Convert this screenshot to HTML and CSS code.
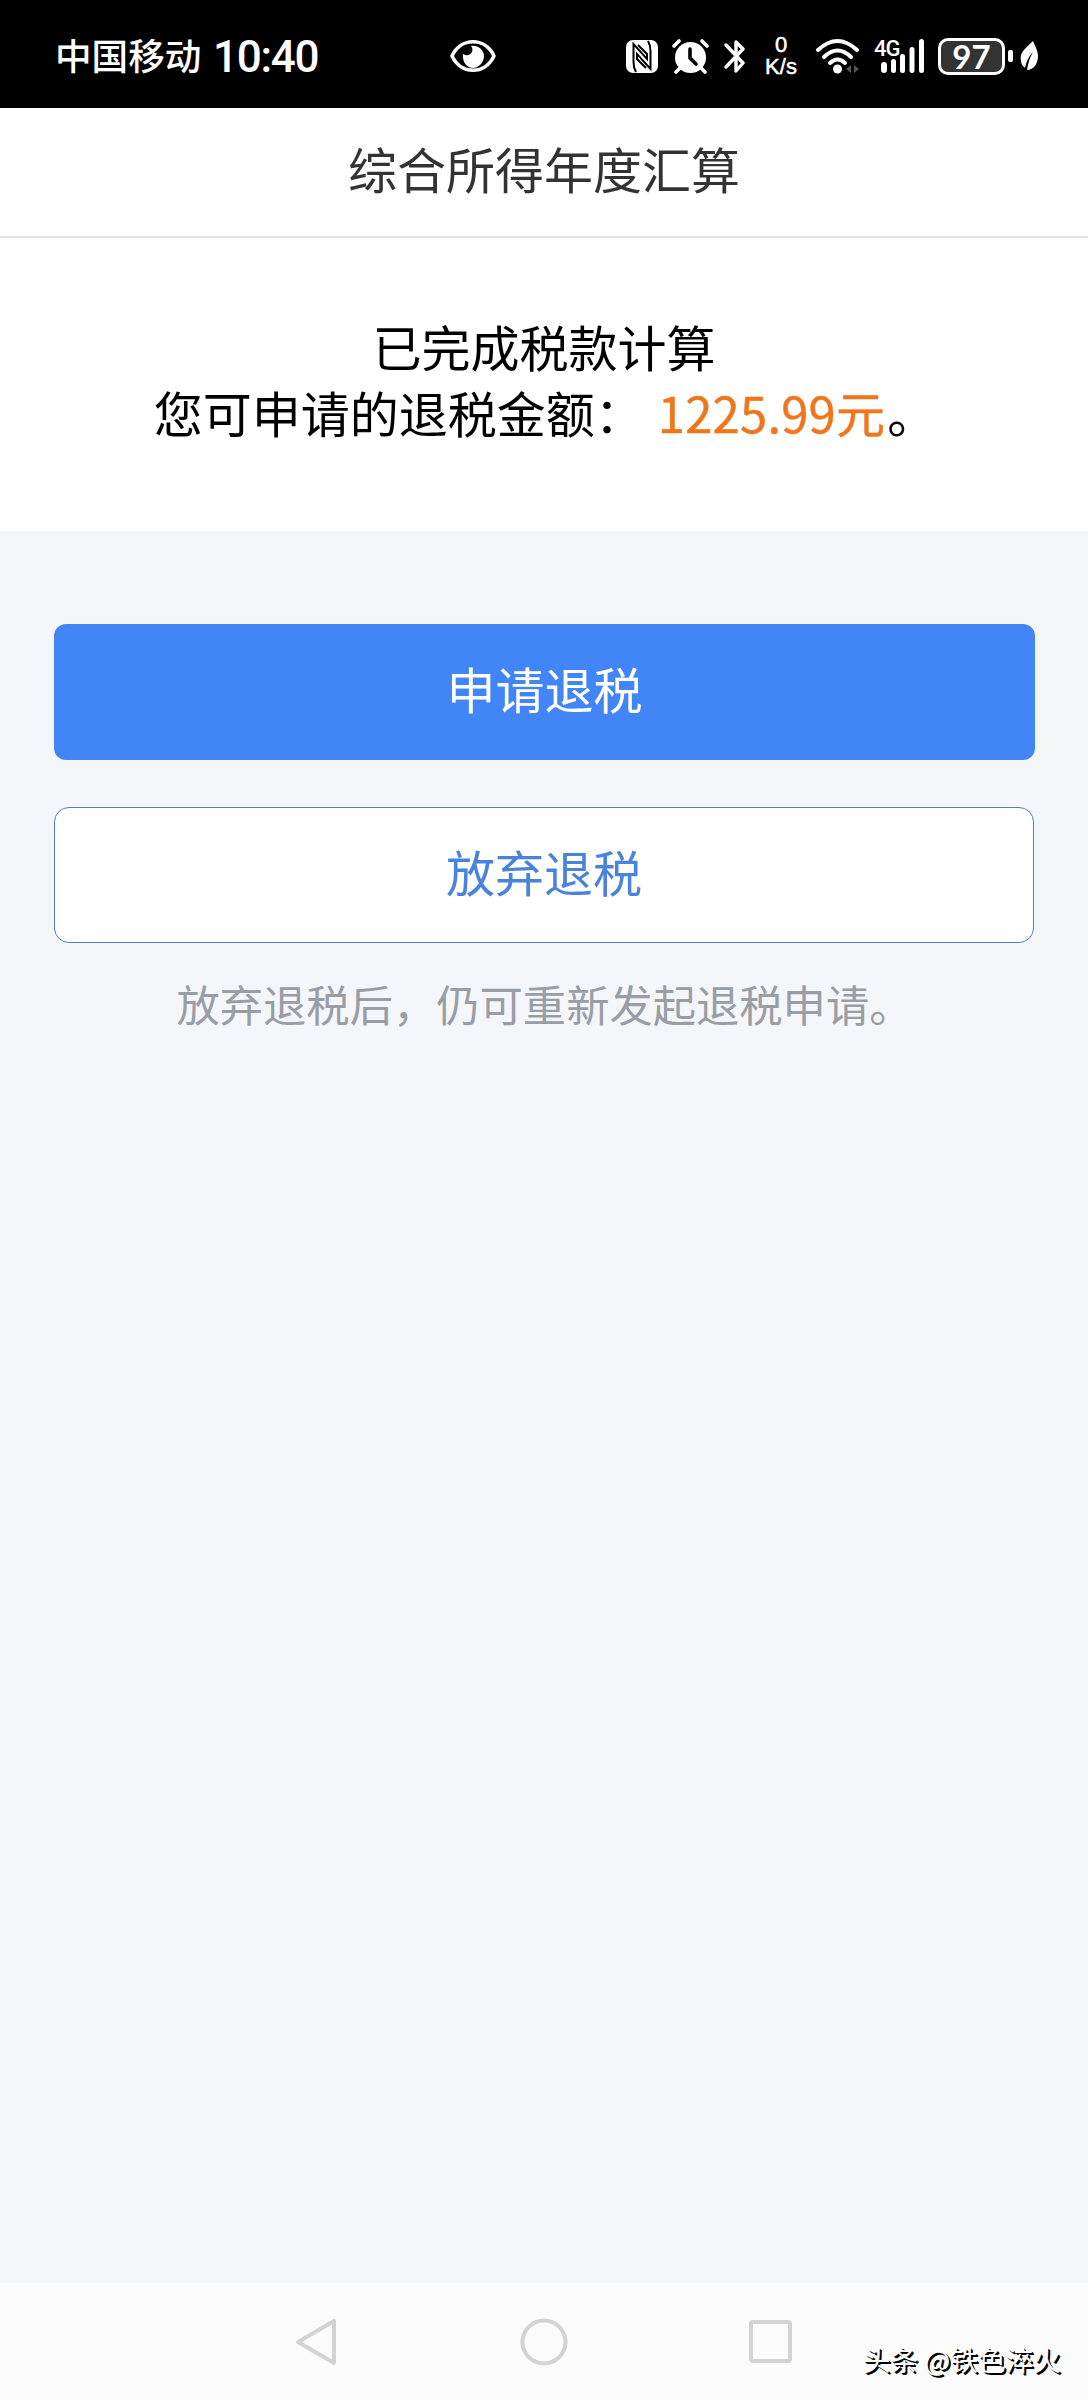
FILE: index.html
```html
<!DOCTYPE html>
<html lang="zh-CN">
<head>
<meta charset="utf-8">
<title>综合所得年度汇算</title>
<link rel="stylesheet" href="styles.css">
</head>
<body>
<header class="status">
  <span class="carrier">中国移动</span>
  <span class="clock">10:40</span>
  <svg class="eye" width="46" height="34" viewBox="0 0 46 34"><path d="M2 17C11 -2 35 -2 44 17C35 36 11 36 2 17Z" fill="none" stroke="#fff" stroke-width="3.6" stroke-linejoin="round"/><path d="M21 7C25 12 20 19 13 15C12 23 17 29 23 29C29 29 34 23 34 17C34 11 28 6 21 7Z" fill="#fff"/></svg>
  <svg class="nfc" width="32" height="33" viewBox="0 0 32 33"><rect width="32" height="33" rx="7" fill="#fff"/><path d="M10 32Q7.500 28 7.500 22V4L21 19V14L12 5M22 1Q24.500 5 24.500 11V29L11 14V19L20 28" fill="none" stroke="#000" stroke-width="2"/></svg>
  <svg class="alarm" width="37" height="35" viewBox="0 0 37 35"><circle cx="18.500" cy="18.500" r="15.500" fill="#fff"/><path d="M2 7L7 2M35 7L30 2M8 29L4 33M29 29L33 33" stroke="#fff" stroke-width="3.600" stroke-linecap="round"/><path d="M18 10V19L24 25" stroke="#000" stroke-width="3.600" stroke-linecap="round" fill="none"/></svg>
  <svg class="bt" width="22" height="35" viewBox="0 0 22 35"><path d="M2 6L19 24L12 32V3L19 10L2 28" fill="none" stroke="#fff" stroke-width="3.400" stroke-linecap="round" stroke-linejoin="round"/></svg>
  <span class="speed"><span>0</span><span>K/s</span></span>
  <svg class="wifi" width="46" height="36" viewBox="0 0 46 36"><g fill="none" stroke="#fff" stroke-width="4" stroke-linecap="round"><path d="M3 12Q22.500 -6 42 12"/><path d="M9 19Q22.500 6 36 19"/><path d="M15 25Q22.500 18 30 25"/></g><circle cx="22.500" cy="31" r="4.500" fill="#fff"/><path d="M31 31L36 27V35ZM44 31L39 27V35Z" fill="#555"/></svg>
  <svg class="signal" width="52" height="38" viewBox="0 0 52 38"><text x="0" y="19" class="net">4G</text><g fill="#fff"><rect x="7" y="25" width="6" height="11" rx="3"/><rect x="17" y="22" width="5" height="14" rx="2.500"/><rect x="26" y="17" width="5" height="19" rx="2.500"/><rect x="35.500" y="10" width="5" height="26" rx="2.500"/><rect x="45" y="2" width="5" height="34" rx="2.500"/></g></svg>
  <span class="battery">97</span>
  <span class="cap"></span>
  <svg class="leaf" width="19" height="30" viewBox="0 0 19 30"><path d="M13 0C7 6 -1 11 1 20C1 23 3 25 5 27C6 21 9 15 13 11C10 16 8 22 7 29C14 29 18 22 18 15C18 10 15 5 13 0Z" fill="#fff"/></svg>
</header>
<h1 class="title">综合所得年度汇算</h1>
<section class="result">
  <p>已完成税款计算</p>
  <p class="sum">您可申请的退税金额：<span class="amount">1225.99元</span>。</p>
</section>
<main class="actions">
  <button class="btn primary">申请退税</button>
  <button class="btn outline">放弃退税</button>
  <p class="note">放弃退税后，仍可重新发起退税申请。</p>
</main>
<nav class="nav">
  <svg width="48" height="48" viewBox="0 0 48 48"><path d="M41 3V45L5 24Z"/></svg>
  <svg width="48" height="48" viewBox="0 0 48 48"><circle cx="24" cy="24" r="21.500"/></svg>
  <svg width="48" height="48" viewBox="0 0 48 48"><rect x="4" y="4" width="39" height="39" rx="2"/></svg>
  <span class="mark">头条 @铁色淬火</span>
</nav>
</body>
</html>
```
FILE: styles.css
```css
* { box-sizing: border-box; margin: 0; padding: 0; }
body {
  display: flex;
  flex-direction: column;
  width: 1088px;
  height: 2400px;
  background: #f4f6fa;
  color: #000;
  font-family: "Noto Sans CJK SC", sans-serif;
  font-size: 49px;
}
svg { display: block; flex: none; }
.status {
  display: flex;
  align-items: center;
  height: 108px;
  padding: 4px 0 0 55px;
  background: #000;
  color: #fff;
  white-space: nowrap;
}
.carrier { width: 150px; margin-top: -3px; font-size: 36.6px; font-weight: 500; line-height: 50px; }
.clock { width: 245px; padding-left: 8px; margin-top: 2px; font-family: Roboto, sans-serif; font-size: 44px; font-weight: 500; line-height: 50px; letter-spacing: -1.3px; }
.nfc { margin-left: 130px; }
.alarm { margin-left: 14px; }
.bt { margin-left: 15px; }
.speed { display: flex; flex-direction: column; align-items: center; width: 38px; margin-left: 16px; font: 22px/22px "Liberation Sans", sans-serif; -webkit-text-stroke: 0.5px #fff; }
.wifi { margin-left: 15px; }
.signal { margin-left: 13px; }
.net { fill: #fff; font: 500 22px Roboto, sans-serif; letter-spacing: -1px; }
.battery { width: 67px; height: 37px; margin-left: 12px; border: 3px solid #fff; border-radius: 10px; background: #333; font: 700 33px/31px Lato, sans-serif; text-align: center; }
.cap { width: 5px; height: 12px; margin-left: 3px; border-radius: 2px; background: #fff; }
.leaf { margin-left: 7px; }
.title {
  height: 130px;
  border-bottom: 2px solid #e2e2e2;
  background: #fff;
  color: #333;
  font-size: 49px;
  font-weight: 400;
  line-height: 120px;
  text-align: center;
}
.result { height: 293px; padding-top: 75px; background: #fff; line-height: 66px; text-align: center; }
.sum { padding-left: 2px; white-space: nowrap; }
.amount { margin-left: 14px; margin-right: 2px; color: #f0761c; letter-spacing: 0.2px; -webkit-text-stroke: 0.4px #f0761c; }
.actions { display: flex; flex: 1; flex-direction: column; padding: 93px 53px 0 54px; }
.btn { height: 136px; padding-bottom: 9px; border: 0; border-radius: 12px; font: inherit; line-height: 125px; }
.primary { background: #4285f6; color: #fff; }
.outline { width: 980px; margin-top: 47px; border: 1px solid #4d82bd; border-radius: 15px; background: #fff; color: #4a83dd; }
.note { margin-top: 28px; color: #999ea4; font-size: 43.3px; line-height: 64px; text-align: center; }
.nav { display: flex; align-items: flex-start; height: 117px; padding: 35px 0 0 293px; background: #fcfcfc; }
.nav svg { margin-right: 179px; fill: none; stroke: #d3d3d3; stroke-width: 4; stroke-linejoin: round; }
.nav svg:nth-child(3) { margin-right: 68px; }
.mark { margin-top: 21px; color: #fff; font-size: 27.6px; line-height: 40px; white-space: nowrap; text-shadow: 1px 1px 0 #000, 2px 2px 0 #000; }
```
